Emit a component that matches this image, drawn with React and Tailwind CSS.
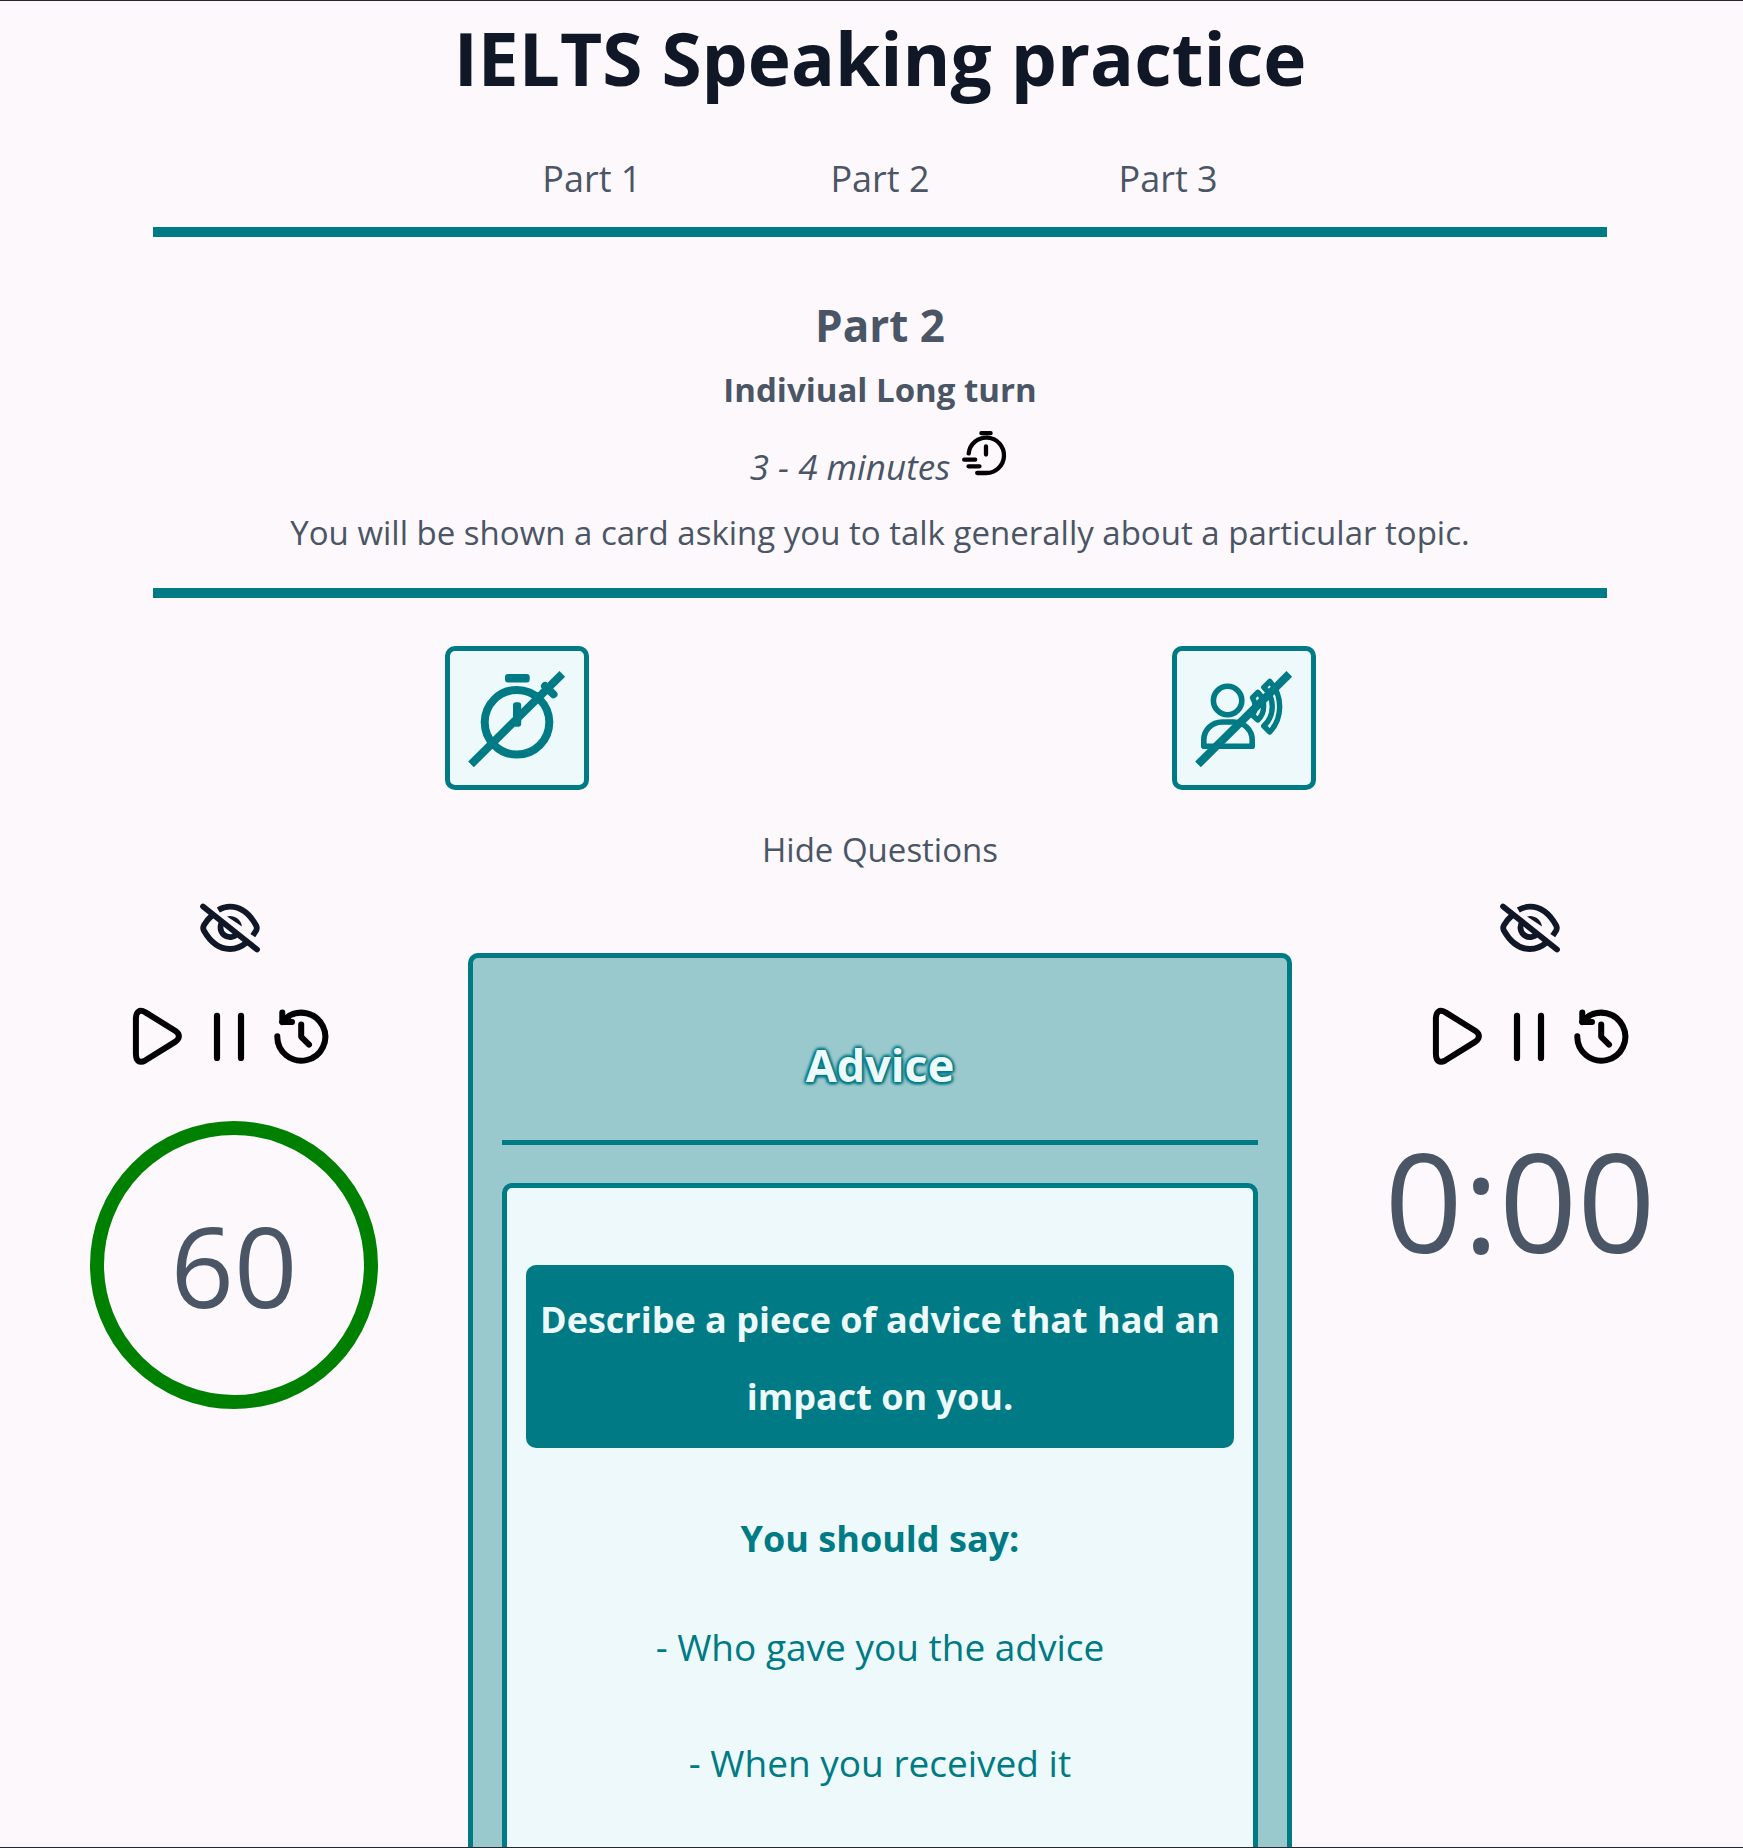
const questions = ['- Who gave you the advice', '- When you received it'];

function FastTimerIcon() {
  return (
    <svg viewBox="0 0 48 48" className="-mt-1 size-12 text-black" fill="none" stroke="currentColor" strokeWidth="4.3" strokeLinecap="round" aria-hidden="true">
      <path d="M19.4 3.2h9.2M24 16.4v8.2M2.2 29.7h11M6.5 36.3h11" />
      <path d="M6.7 23.4A17.7 17.7 0 1 1 24 43H15.2" />
    </svg>
  );
}

function TimerOffIcon() {
  return (
    <svg viewBox="5 5 134 134" className="size-full" fill="none" stroke="currentColor" strokeWidth="8" aria-hidden="true">
      <circle cx="72" cy="76.3" r="32.3" />
      <rect x="60" y="28" width="24.7" height="8.4" rx="3" fill="currentColor" stroke="none" />
      <rect x="68" y="56.3" width="8.2" height="24.4" rx="3" fill="currentColor" stroke="none" />
      <path d="M100 40 108.5 48.3" strokeLinecap="round" />
      <path d="M26 118.4 117.3 27.9" />
    </svg>
  );
}

function VoiceOffIcon() {
  return (
    <svg viewBox="5 5 134 134" className="size-full" fill="none" stroke="currentColor" strokeWidth="5.6" strokeLinejoin="round" aria-hidden="true">
      <circle cx="55.6" cy="54.5" r="14.2" />
      <path d="M31.8 100.3V94A18.3 18 0 0 1 50 76h11.8A18.4 18 0 0 1 80.2 94v6.3Z" />
      <path strokeWidth="5.4" d="M97.8 35.3A37.5 37.5 0 0 1 97.8 86L91.8 80A26.4 26.4 0 0 0 91.8 41.3Z" />
      <path strokeWidth="5.4" d="M85.8 46.3A19.3 19.3 0 0 1 85.8 74L80.5 69.3A17 17 0 0 0 80.5 51.7Z" />
      <path strokeWidth="8" d="M26 118.4 117.3 27.9" />
    </svg>
  );
}

function EyeOffIcon() {
  return (
    <svg viewBox="0 0 72 72" className="size-18" fill="none" stroke="currentColor" strokeWidth="5.8" aria-hidden="true">
      <path d="M9 14.5 63 57.5" strokeLinecap="round" />
      <path d="M18.5 23C14.5 26.5 11.5 30.5 10 33.2Q8.4 36 10 38.8C15.5 48.5 24.5 57 36 57C42 57 47.5 54.8 52.5 50.5" />
      <path d="M24.3 18Q30 14.7 36 14.7C47.5 14.7 56.5 23.5 62 33.2Q63.6 36 62 38.8L58.8 43.6" />
      <path d="M28.6 29.5A9.2 9.2 0 1 0 43.5 41.5" />
      <path d="M33 24.4A12 12 0 0 1 48 34.6Z" fill="currentColor" stroke="none" />
    </svg>
  );
}

function PlayIcon() {
  return (
    <svg viewBox="0 0 72 72" className="size-18" fill="none" stroke="currentColor" strokeWidth="6" strokeLinejoin="round" aria-hidden="true">
      <path d="M13.9 19C13.9 11.5 17.5 9 23.5 12.4L53.5 31C58 34 58 38.5 53.5 41.6L23.5 60.3C17.5 63.8 13.9 61 13.9 53.5Z" />
    </svg>
  );
}

function PauseIcon() {
  return (
    <svg viewBox="0 0 72 72" className="size-18" fill="none" stroke="currentColor" strokeWidth="6.2" strokeLinecap="round" aria-hidden="true">
      <path d="M23 15.8v42.2M47 15.8v42.2" />
    </svg>
  );
}

function RestartIcon() {
  return (
    <svg viewBox="0 0 72 72" className="size-18" fill="none" stroke="currentColor" strokeWidth="6" strokeLinecap="round" strokeLinejoin="round" aria-hidden="true">
      <path d="M11.3 36.3A24 24 0 1 0 20 18.2" />
      <path d="M16.3 12.6V22H26" />
      <path d="M16.3 22 22 17" />
      <path d="M35.2 24.6v12.2l7.8 7.8" />
    </svg>
  );
}

function TimerControls({ name, children }) {
  return (
    <section aria-label={name} className="flex flex-col items-center pt-4">
      <button type="button" aria-label={`Hide ${name}`} className="text-gray-900">
        <EyeOffIcon />
      </button>
      <div className="mt-9 mb-[49px] flex text-black">
        <button type="button" aria-label="Play"><PlayIcon /></button>
        <button type="button" aria-label="Pause"><PauseIcon /></button>
        <button type="button" aria-label="Restart"><RestartIcon /></button>
      </div>
      {children}
    </section>
  );
}

export default function App() {
  return (
    <div className="h-screen overflow-hidden border-y border-[#26262e] bg-[#fcf8fc] pl-[17px] font-['Open_Sans','Noto_Sans',sans-serif] text-gray-600">
      <h1 className="pt-[9px] text-center text-[73px] leading-[96px] font-bold text-gray-900">IELTS Speaking practice</h1>

      <nav className="mx-[136px] mt-[45px] flex justify-center gap-[189px] border-b-10 border-[#007a84] pb-5 text-[36px] leading-[56px]">
        <button type="button">Part 1</button>
        <button type="button">Part 2</button>
        <button type="button">Part 3</button>
      </nav>

      <header className="mx-[136px] border-b-10 border-[#007a84] pt-14 pb-[22px] text-center text-[33px]">
        <h2 className="text-[44px] leading-[65px] font-bold">Part 2</h2>
        <h3 className="leading-[64px] font-bold">Indiviual Long turn</h3>
        <p className="mt-3 flex items-start justify-center gap-3 text-[35px] leading-[66px] italic">
          3 - 4 minutes
          <FastTimerIcon />
        </p>
        <p className="leading-[66px]">You will be shown a card asking you to talk generally about a particular topic.</p>
      </header>

      <div className="mx-[136px] mt-12 grid grid-cols-2 justify-items-center text-[#007a84]">
        <button type="button" aria-label="Disable timer" className="size-36 rounded-[10px] border-5 border-[#007a84] bg-[#edf9fb]">
          <TimerOffIcon />
        </button>
        <button type="button" aria-label="Disable voice" className="size-36 rounded-[10px] border-5 border-[#007a84] bg-[#edf9fb]">
          <VoiceOffIcon />
        </button>
      </div>

      <div className="mt-[34px] text-center text-[33px] leading-[52px]">
        <button type="button">Hide Questions</button>
      </div>

      <main className="grid grid-cols-[31fr_60fr_31fr] gap-x-[25px]">
        <TimerControls name="preparation timer">
          <div className="ml-2 flex size-72 items-center justify-center rounded-full border-14 border-[#008000] text-[111px] leading-none">60</div>
        </TimerControls>

        <article className="mt-[77px] rounded-[10px] border-5 border-[#007a84] bg-[#9ac9cd] px-[29px] pt-[59px] pb-8 text-center">
          <h2 className="border-b-5 border-[#007a84] pb-[27px] text-[45px] leading-[96px] font-bold text-[#edf9fb] [text-shadow:0_2px_3px_#007a84,0_-2px_3px_#007a84,2px_1px_3px_#007a84,-2px_1px_3px_#007a84,0_0_2px_#007a84,0_0_4px_#007a84]">Advice</h2>
          <div className="mt-[38px] rounded-[10px] border-5 border-[#007a84] bg-[#edf9fb] px-[19px] pt-[77px] pb-24 text-[37px] leading-[77px] text-[#007a84]">
            <p className="rounded-[10px] bg-[#007a84] px-2 pt-4 pb-[13px] text-[36px] leading-[77px] font-bold text-[#edf9fb]">Describe a piece of advice that had an impact on you.</p>
            <h3 className="mt-[52px] mb-[31px] text-[36px] leading-[77px] font-bold">You should say:</h3>
            <ul className="flex flex-col gap-[39px]">
              {questions.map((question) => (
                <li key={question}>{question}</li>
              ))}
            </ul>
          </div>
        </article>

        <TimerControls name="speaking timer">
          <div className="mr-5 text-[137px] leading-[158px]">0:00</div>
        </TimerControls>
      </main>
    </div>
  );
}
